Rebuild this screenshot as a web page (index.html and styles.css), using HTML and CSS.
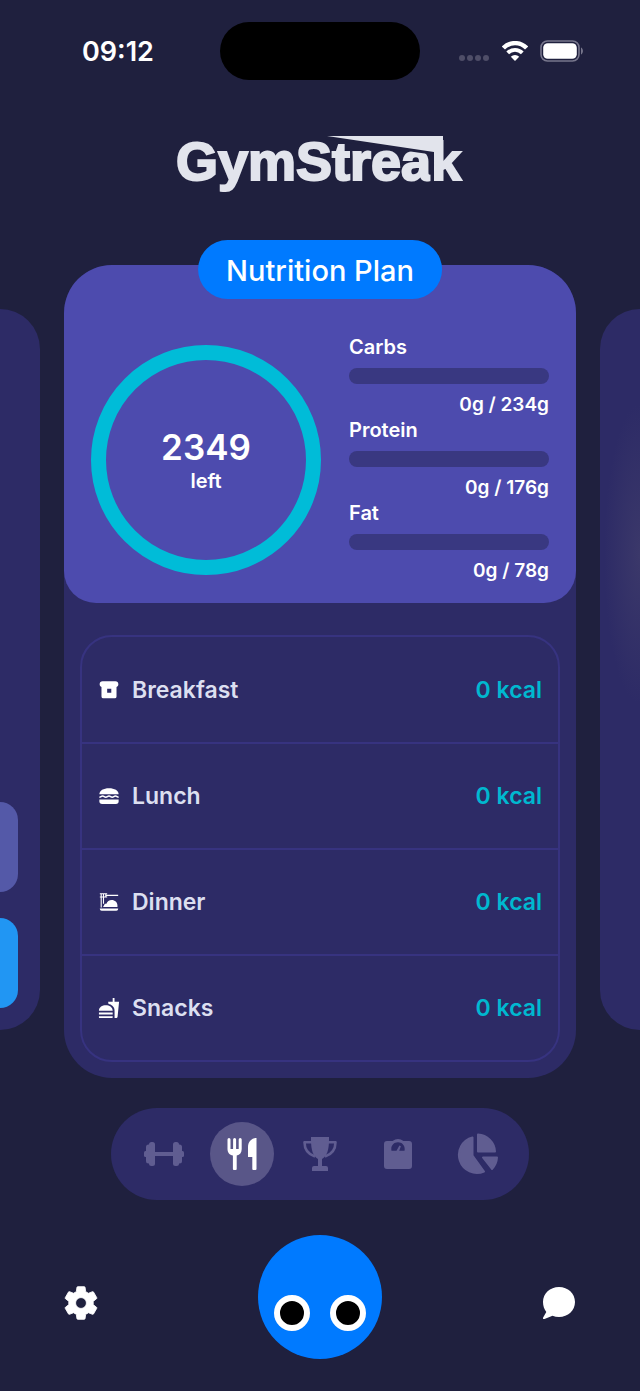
FILE: index.html
```html
<!DOCTYPE html>
<html lang="en">
<head>
    <meta charset="UTF-8">
    <meta name="viewport" content="width=device-width, initial-scale=1.0">
    <title>GymStreak - Nutrition Plan</title>
    <link rel="stylesheet" href="styles.css">
</head>
<body>
    <div class="status-bar">
        <div class="status-time">09:12</div>
        <div class="island"></div>
        <div class="status-icons">
            <svg width="32" height="8" viewBox="0 0 32 8" fill="#4f4e68">
                <circle cx="4" cy="4" r="3"/><circle cx="12" cy="4" r="3"/><circle cx="20" cy="4" r="3"/><circle cx="28" cy="4" r="3"/>
            </svg>
            <svg width="26" height="20" viewBox="0 0 26 20" fill="none" stroke="#fff">
                <path d="M1.400 7a16.200 16.200 0 0 1 23.200 0" stroke-width="4.400"/>
                <path d="M5.700 11.900a10.200 10.200 0 0 1 14.600 0" stroke-width="3.800"/>
                <path d="M13 20l-4.200-4.200a6 6 0 0 1 8.400 0z" fill="#fff" stroke="none"/>
            </svg>
            <svg width="44" height="22" viewBox="0 0 44 22">
                <rect x="1" y="1" width="38" height="20" rx="6.500" fill="none" stroke="#77768c" stroke-width="1.600"/>
                <rect x="3.200" y="3.200" width="33.600" height="15.600" rx="4.500" fill="#fff"/>
                <path d="M41 7.500c2.600 1.200 2.600 5.800 0 7z" fill="#77768c"/>
            </svg>
        </div>
    </div>

    <h1 class="logo">
        <svg width="290" height="62" viewBox="0 0 290 62">
            <text class="logo-text" x="1" y="45">GymStreak</text>
            <path d="M151 3L257 18V46" class="logo-cut"/>
            <path d="M152 1H268V20H259V17z" class="logo-flag"/>
        </svg>
    </h1>

    <main class="carousel">
        <div class="side-card side-left">
            <div class="side-block"></div>
            <div class="side-block side-block-blue"></div>
        </div>

        <section class="card">
            <h2 class="card-title">Nutrition Plan</h2>
            <div class="summary">
                <div class="ring">
                    <div class="ring-value">2349</div>
                    <div class="ring-label">left</div>
                </div>
                <div class="macros">
                    <div class="macro">
                        <label for="carbs">Carbs</label>
                        <progress id="carbs" value="0" max="234"></progress>
                        <span class="macro-value">0g / 234g</span>
                    </div>
                    <div class="macro">
                        <label for="protein">Protein</label>
                        <progress id="protein" value="0" max="176"></progress>
                        <span class="macro-value">0g / 176g</span>
                    </div>
                    <div class="macro">
                        <label for="fat">Fat</label>
                        <progress id="fat" value="0" max="78"></progress>
                        <span class="macro-value">0g / 78g</span>
                    </div>
                </div>
            </div>

            <div class="meals">
                <button class="meal">
                    <svg class="meal-icon" viewBox="0 0 24 24" fill="#fff">
                        <path fill-rule="evenodd" d="M5 2.500h14c2 0 3.200 1.400 3.200 3.200 0 1.500-.8 2.500-2 3V19a2 2 0 0 1-2 2H5.800a2 2 0 0 1-2-2V8.700c-1.200-.5-2-1.500-2-3C1.800 3.900 3 2.500 5 2.500zM10 10.500v4.500h4.500v-4.500z"/>
                    </svg>
                    <span class="meal-name">Breakfast</span>
                    <span class="meal-kcal">0 kcal</span>
                </button>
                <button class="meal">
                    <svg class="meal-icon" viewBox="0 0 24 24" fill="#fff">
                        <path d="M1.500 10c0-4 4.500-6.500 10.500-6.500S22.500 6 22.500 10z"/>
                        <path d="M1.500 13.300c1.800 0 1.800-1.300 3.500-1.300s1.800 1.300 3.500 1.300 1.800-1.300 3.500-1.300 1.800 1.300 3.500 1.300 1.800-1.300 3.500-1.300 1.800 1.300 3.500 1.300" fill="none" stroke="#fff" stroke-width="1.700"/>
                        <path d="M1.500 15.800h21v2a3 3 0 0 1-3 3h-15a3 3 0 0 1-3-3z"/>
                    </svg>
                    <span class="meal-name">Lunch</span>
                    <span class="meal-kcal">0 kcal</span>
                </button>
                <button class="meal">
                    <svg class="meal-icon" viewBox="0 0 24 24" fill="#fff">
                        <path d="M2 19h20v.6a2 2 0 0 1-2 2H4a2 2 0 0 1-2-2zM9 17.500H5.500l2-3.500h1.700c.7-2.600 3-4.200 5.800-4.200 3.400 0 6.200 2.500 6.200 5.700v2z"/>
                        <path d="M3.500 2.500V18M6 2.500V14M8.500 2.500v4M2 3h8M2 6.500h8M9 4.800h13" fill="none" stroke="#fff" stroke-width="1.200"/>
                    </svg>
                    <span class="meal-name">Dinner</span>
                    <span class="meal-kcal">0 kcal</span>
                </button>
                <button class="meal">
                    <svg class="meal-icon" viewBox="0 0 24 24" fill="#fff">
                        <path d="M18.060 22.990h1.660c.84 0 1.530-.64 1.630-1.460L23 5.050h-5V1h-1.970v4.050h-4.970l.3 2.340c1.710.47 3.310 1.320 4.270 2.260 1.440 1.420 2.430 2.890 2.430 5.290zM1 21.990V21h15.030v.99c0 .55-.45 1-1.010 1H2.010c-.56 0-1.010-.45-1.010-1zM16.030 14.990c0-8-15.030-8-15.030 0zM1.020 17h15v2h-15z"/>
                    </svg>
                    <span class="meal-name">Snacks</span>
                    <span class="meal-kcal">0 kcal</span>
                </button>
            </div>
        </section>

        <div class="side-card side-right"></div>
    </main>

    <nav class="tabs">
        <button class="tab" aria-label="Workouts">
            <svg width="40" height="26" viewBox="0 0 40 26" fill="currentColor">
                <path d="M10 11h20v4H10z"/>
                <rect x="5" y="1" width="6" height="24" rx="2.500"/><rect x="2" y="3.500" width="6" height="19" rx="2.500"/><rect x="0" y="10" width="5" height="6" rx="1.500"/>
                <rect x="29" y="1" width="6" height="24" rx="2.500"/><rect x="32" y="3.500" width="6" height="19" rx="2.500"/><rect x="35" y="10" width="5" height="6" rx="1.500"/>
            </svg>
        </button>
        <button class="tab tab-active" aria-label="Nutrition">
            <svg width="32" height="34" viewBox="0 0 32 34" fill="currentColor">
                <path d="M1.500 2.500a1.500 1.500 0 0 1 3 0V12h2.600V2.500a1.500 1.500 0 0 1 3 0V12h2.600V2.500a1.500 1.500 0 0 1 3 0V12c0 3.500-1.800 6-5 6.600V32a1 1 0 0 1-1 1H7.900a1 1 0 0 1-1-1V18.600C3.600 18 1.500 15.500 1.500 12zM30.500 1v31a1 1 0 0 1-1 1h-2.200a1 1 0 0 1-1-1V20H22V10c0-5 3.500-9 8.500-9z"/>
            </svg>
        </button>
        <button class="tab" aria-label="Achievements">
            <svg width="36" height="36" viewBox="0 0 36 36" fill="currentColor">
                <path d="M9 1h18v3c0 10-2 16-7 19v7h4a2 2 0 0 1 2 2v3H10v-3a2 2 0 0 1 2-2h4v-7C11 20 9 14 9 4z"/>
                <path d="M10 6.200H2.500c0 7 3.500 12 10.500 14.300M26 6.200h7.500c0 7-3.500 12-10.500 14.300" fill="none" stroke="currentColor" stroke-width="2.600" stroke-linejoin="round"/>
            </svg>
        </button>
        <button class="tab" aria-label="Weight">
            <svg width="30" height="32" viewBox="0 0 30 32" fill="currentColor">
                <path fill-rule="evenodd" d="M4 3h5.500a9.500 9.500 0 0 1 11 0H26a3 3 0 0 1 3 3v22a3 3 0 0 1-3 3H4a3 3 0 0 1-3-3V6a3 3 0 0 1 3-3zM8.500 12.800h5L16.400 7.500l1.500.8-1.700 4.500h5.300C22.500 8 19.500 4.200 15 4.200S7.500 8 8.500 12.800z"/>
            </svg>
        </button>
        <button class="tab" aria-label="Statistics">
            <svg width="44" height="42" viewBox="0 0 44 42" fill="currentColor" stroke="currentColor" stroke-width="2" stroke-linejoin="round">
                <path d="M18.500 4.500V22.500L30 38.500A18 18 0 1 1 18.500 4.500z"/>
                <path d="M24 1.500A18 18 0 0 1 41 18.500H24z"/>
                <path d="M29 24.500H43A18 18 0 0 1 38 36z"/>
            </svg>
        </button>
    </nav>

    <footer class="bottom-bar">
        <button class="icon-button" aria-label="Settings">
            <svg width="34" height="36" viewBox="2 1.500 20 21" fill="#fff">
                <path d="M19.140 12.940c.04-.3.060-.61.060-.94 0-.32-.02-.64-.07-.94l2.030-1.580a.49.49 0 0 0 .12-.61l-1.920-3.320a.488.488 0 0 0-.59-.22l-2.390.96c-.5-.38-1.030-.7-1.620-.94l-.36-2.540a.484.484 0 0 0-.48-.41h-3.840c-.24 0-.43.17-.47.41l-.36 2.540c-.59.24-1.130.57-1.620.94l-2.390-.96c-.22-.08-.47 0-.59.22L2.740 8.870c-.12.21-.08.47.12.61l2.030 1.580c-.05.3-.09.63-.09.94s.02.64.07.94l-2.030 1.580a.49.49 0 0 0-.12.61l1.920 3.320c.12.22.37.29.59.22l2.390-.96c.5.38 1.030.7 1.620.94l.36 2.540c.05.24.24.41.48.41h3.840c.24 0 .44-.17.47-.41l.36-2.540c.59-.24 1.130-.56 1.620-.94l2.390.96c.22.08.47 0 .59-.22l1.920-3.320c.12-.22.07-.47-.12-.61zM12 15.200A3.200 3.200 0 1 1 12 8.800a3.200 3.200 0 0 1 0 6.400z" stroke="#fff" stroke-width=".5" stroke-linejoin="round"/>
            </svg>
        </button>
        <button class="coach" aria-label="Coach">
            <span class="eye"></span>
            <span class="eye"></span>
        </button>
        <button class="icon-button" aria-label="Chat">
            <svg width="34" height="34" viewBox="0 0 34 34" fill="#fff">
                <path d="M17 1c9 0 16 6.500 16 15s-7 15-16 15c-2.300 0-4.500-.4-6.500-1.200L2.500 33c-1.400.4-2-.8-1.200-1.800L4.300 26C2.200 23.300 1 20 1 16 1 7.500 8 1 17 1z"/>
            </svg>
        </button>
    </footer>
</body>
</html>
```
FILE: styles.css
```css
* {
    box-sizing: border-box;
}
body {
    margin: 0;
    background: #1f203e;
    color: #fff;
    font-family: Inter, "Noto Sans", sans-serif;
    overflow-x: hidden;
}
h1, h2 {
    margin: 0;
}
button {
    margin: 0;
    padding: 0;
    border: none;
    background: none;
    color: inherit;
    font: inherit;
    cursor: pointer;
}
svg {
    display: block;
}

/* Status bar */
.status-bar {
    display: grid;
    grid-template-columns: 1fr 200px 1fr;
    align-items: center;
    padding: 22px 56px 0;
}
.status-time {
    padding-left: 26px;
    font-size: 27px;
    font-weight: 600;
}
.island {
    height: 58px;
    border-radius: 29px;
    background: #000;
}
.status-icons {
    display: flex;
    justify-content: flex-end;
    align-items: center;
    gap: 12px;
}
.status-icons svg:first-child {
    margin-top: 14px;
}

.logo {
    display: flex;
    justify-content: center;
    padding: 55px 0 0;
}
.logo svg {
    overflow: visible;
}
.logo-text {
    fill: #e2e4ec;
    stroke: #e2e4ec;
    stroke-width: 2px;
    font-family: "Liberation Sans", Arial, sans-serif;
    font-size: 54px;
    font-weight: bold;
}
.logo-cut {
    fill: none;
    stroke: #1f203e;
    stroke-width: 3px;
}
.logo-flag {
    fill: #e2e4ec;
}

/* Cards */
.carousel {
    display: grid;
    grid-template-columns: 40px 1fr 40px;
    gap: 24px;
    padding-top: 68px;
}
.side-card {
    margin: 44px 0 48px;
    background: #2d2b66;
}
.side-left {
    display: flex;
    flex-direction: column;
    justify-content: flex-end;
    gap: 26px;
    padding: 0 22px 22px 0;
    border-radius: 0 44px 44px 0;
}
.side-right {
    border-radius: 44px 0 0 44px;
    background: radial-gradient(ellipse 36px 150px at 100% 34%, #3b386a, #2d2b66);
}
.side-block {
    height: 90px;
    border-radius: 0 28px 28px 0;
    background: #5459a8;
}
.side-block-blue {
    background: #2196f3;
}
.card {
    position: relative;
    padding-bottom: 16px;
    border-radius: 48px;
    background: #2d2b66;
}
.card-title {
    position: absolute;
    top: -25px;
    left: 50%;
    transform: translateX(-50%);
    padding: 2px 28px 0;
    border-radius: 30px;
    background: #007aff;
    font-size: 29px;
    font-weight: 500;
    line-height: 57px;
    white-space: nowrap;
}
.summary {
    display: flex;
    align-items: center;
    gap: 28px;
    padding: 70px 27px 19px;
    border-radius: 48px 48px 32px 32px;
    background: #4d4bae;
}
.ring {
    display: flex;
    flex-direction: column;
    align-items: center;
    justify-content: center;
    width: 230px;
    height: 230px;
    border: 15px solid #00bcd8;
    border-radius: 50%;
}
.ring-value {
    font-size: 35px;
    font-weight: 600;
    line-height: 42px;
}
.ring-label {
    font-size: 20px;
    font-weight: 600;
    line-height: 26px;
}
.macros {
    flex: 1;
}
.macro {
    display: flex;
    flex-direction: column;
    font-size: 20px;
    font-weight: 600;
    line-height: 25px;
}
.macro progress {
    width: 100%;
    height: 16px;
    margin: 8px 0;
    border: none;
    border-radius: 8px;
    background: #393881;
    appearance: none;
    overflow: hidden;
}
.macro progress::-webkit-progress-bar {
    background: #393881;
}
.macro progress::-webkit-progress-value {
    background: #00bcd8;
}
.macro-value {
    font-size: 19px;
    line-height: 26px;
    text-align: right;
}

/* Meals */
.meals {
    margin: 32px 16px 0;
    border: 2px solid #373380;
    border-radius: 32px;
}
.meal {
    display: flex;
    align-items: center;
    width: 100%;
    height: 105px;
    padding: 0 16px;
    font-size: 23px;
    font-weight: 600;
    text-align: left;
}
.meal + .meal {
    height: 106px;
    border-top: 2px solid #373380;
}
.meal-icon {
    width: 22px;
    height: 22px;
}
.meal-name {
    flex: 1;
    padding-left: 12px;
    color: #dcdff0;
}
.meal-kcal {
    color: #00b8d0;
}

/* Tabs */
.tabs {
    display: flex;
    gap: 14px;
    width: fit-content;
    margin: 30px auto 0;
    padding: 14px 21px;
    border-radius: 46px;
    background: #2d2b66;
}
.tab {
    display: flex;
    align-items: center;
    justify-content: center;
    width: 64px;
    height: 64px;
    border-radius: 50%;
    color: #605d91;
}
.tab-active {
    background: #595688;
    color: #fff;
}

.bottom-bar {
    display: flex;
    align-items: center;
    justify-content: space-between;
    padding: 35px 64px 32px;
}
.icon-button {
    padding-top: 12px;
}
.coach {
    display: flex;
    justify-content: center;
    align-items: flex-end;
    gap: 20px;
    width: 124px;
    height: 124px;
    padding-bottom: 28px;
    border-radius: 50%;
    background: #007aff;
}
.eye {
    width: 36px;
    height: 36px;
    border: 6px solid #fff;
    border-radius: 50%;
    background: #000;
}
```
